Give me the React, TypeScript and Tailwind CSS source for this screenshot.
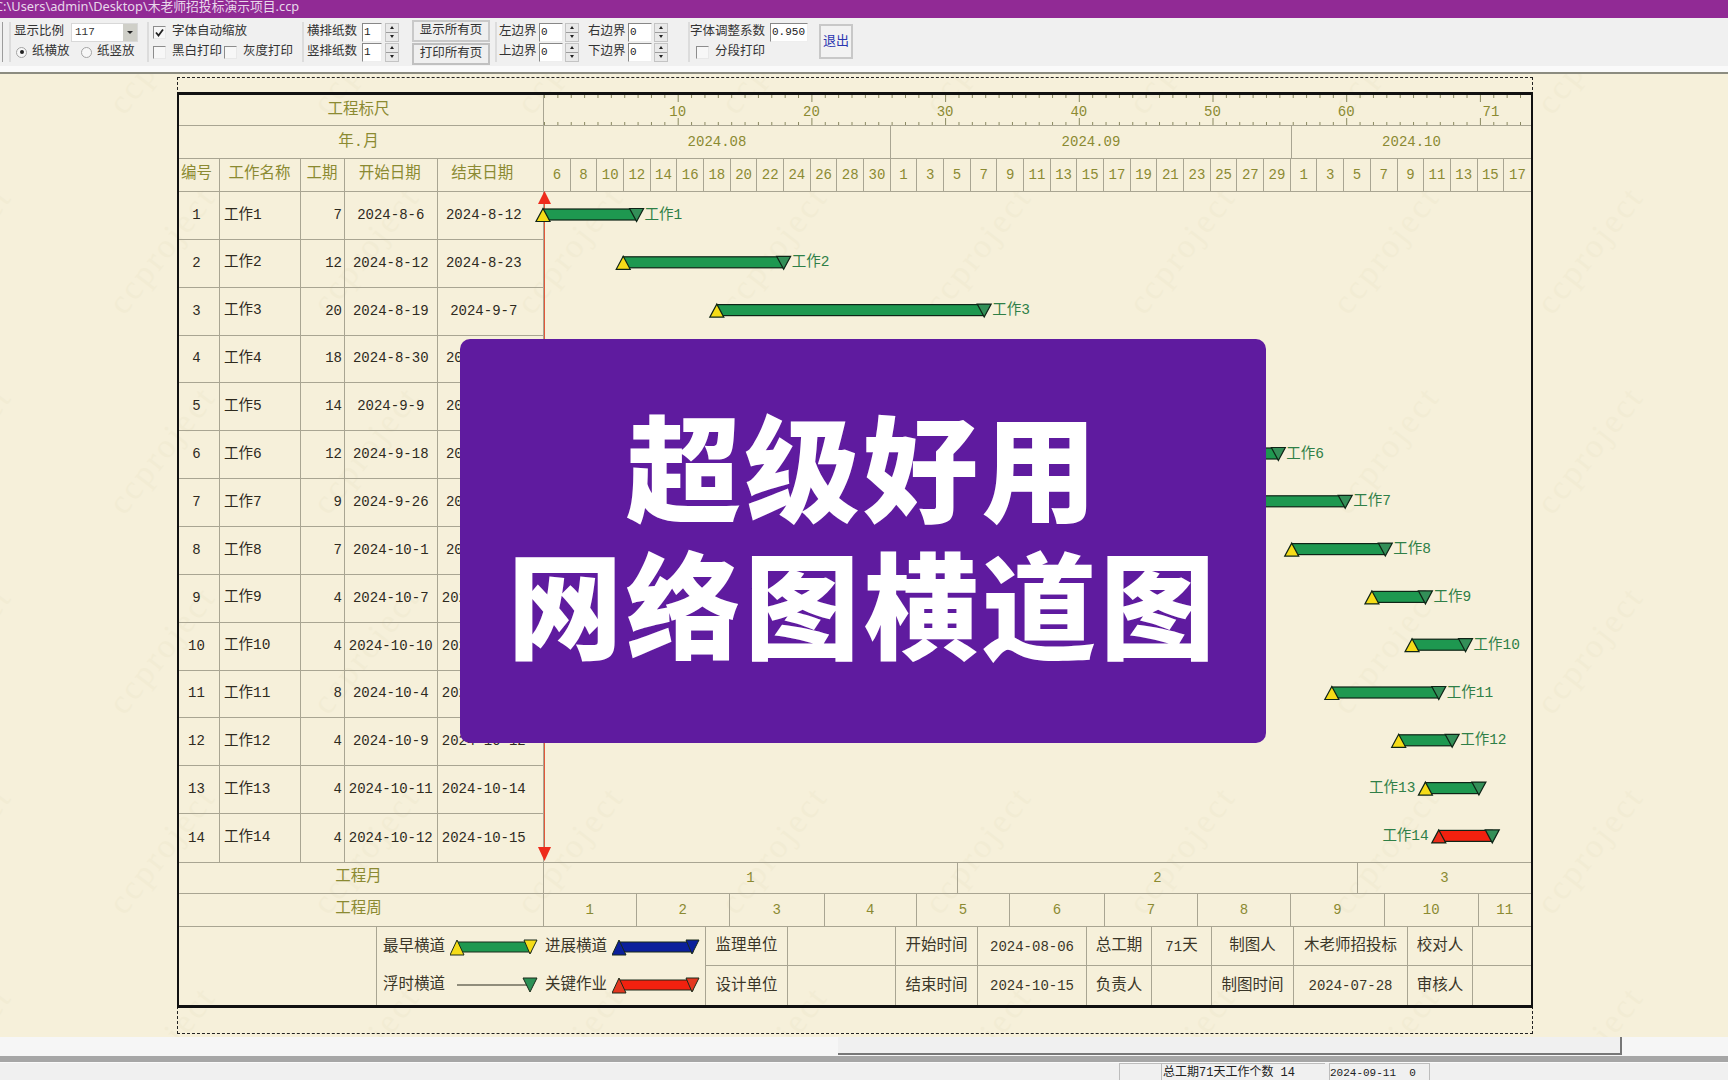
const GRID = 'border-[#a9a592]';
const OLIVE = 'text-[#8b8a32]';

type Job = { id: number; days: number; start: string; end: string; offset: number; critical?: boolean; labelLeft?: boolean };

const JOBS: Job[] = [
  { id: 1, days: 7, start: '2024-8-6', end: '2024-8-12', offset: 0 },
  { id: 2, days: 12, start: '2024-8-12', end: '2024-8-23', offset: 6 },
  { id: 3, days: 20, start: '2024-8-19', end: '2024-9-7', offset: 13 },
  { id: 4, days: 18, start: '2024-8-30', end: '2024-9-16', offset: 24 },
  { id: 5, days: 14, start: '2024-9-9', end: '2024-9-22', offset: 34 },
  { id: 6, days: 12, start: '2024-9-18', end: '2024-9-29', offset: 43 },
  { id: 7, days: 9, start: '2024-9-26', end: '2024-10-4', offset: 51 },
  { id: 8, days: 7, start: '2024-10-1', end: '2024-10-7', offset: 56 },
  { id: 9, days: 4, start: '2024-10-7', end: '2024-10-10', offset: 62 },
  { id: 10, days: 4, start: '2024-10-10', end: '2024-10-13', offset: 65 },
  { id: 11, days: 8, start: '2024-10-4', end: '2024-10-11', offset: 59 },
  { id: 12, days: 4, start: '2024-10-9', end: '2024-10-12', offset: 64 },
  { id: 13, days: 4, start: '2024-10-11', end: '2024-10-14', offset: 66, labelLeft: true },
  { id: 14, days: 4, start: '2024-10-12', end: '2024-10-15', offset: 67, critical: true, labelLeft: true },
];

const DAY_LABELS = [
  6, 8, 10, 12, 14, 16, 18, 20, 22, 24, 26, 28, 30,
  1, 3, 5, 7, 9, 11, 13, 15, 17, 19, 21, 23, 25, 27, 29,
  1, 3, 5, 7, 9, 11, 13, 15, 17,
];

const WEEK_WIDTHS = [92.5, 93.5, 94.5, 92.5, 93, 95, 93, 93, 94, 93.5, 52.5];
const DAY_PX = 13.37;

function Check({ on }: { on?: boolean }) {
  return (
    <span className="flex h-[13px] w-[13px] shrink-0 items-center justify-center border border-t-[#8c8c8c] border-l-[#8c8c8c] border-r-[#e8e8e8] border-b-[#e8e8e8] bg-[#f7f7f7]">
      {on && (
        <svg width="9" height="9" viewBox="0 0 9 9">
          <path d="M1 4.5 L3.5 7.5 L8 1.5" fill="none" stroke="#222" strokeWidth="1.8" />
        </svg>
      )}
    </span>
  );
}

function Radio({ on }: { on?: boolean }) {
  return (
    <span className="flex h-[11px] w-[11px] shrink-0 items-center justify-center rounded-full border border-[#a4a4a4] bg-[#f7f7f7]">
      {on && <span className="h-[4px] w-[4px] rounded-full bg-[#222]" />}
    </span>
  );
}

function Spin() {
  return (
    <span className="flex h-[19px] w-[14px] shrink-0 flex-col border border-[#c4c4c4] bg-[#e9e9e9] text-[#222]">
      <span className="flex flex-1 items-center justify-center border-b border-[#9c9c9c]">
        <span className="h-0 w-0 border-x-[2px] border-b-[3px] border-x-transparent border-b-[#222]" />
      </span>
      <span className="flex flex-1 items-center justify-center">
        <span className="h-0 w-0 border-x-[2px] border-t-[3px] border-x-transparent border-t-[#222]" />
      </span>
    </span>
  );
}

function NumInput({ value, width }: { value: string; width: string }) {
  return (
    <span className={`flex h-[19px] shrink-0 items-center border border-t-[#888] border-l-[#888] border-r-[#eee] border-b-[#eee] bg-white pl-[1px] text-[11px] text-[#222] ${width}`}>
      {value}
    </span>
  );
}

function Field({ label, value }: { label: string; value: string }) {
  return (
    <div className="flex items-center">
      <span className="w-[40px] whitespace-nowrap text-[12.5px]">{label}</span>
      <NumInput value={value} width="w-[24px]" />
      <span className="ml-[2px]">
        <Spin />
      </span>
    </div>
  );
}

function Toolbar() {
  return (
    <div className="flex h-[48px] items-start bg-[#f0f0f0] pt-[4px] text-[#333]">
      <div className="h-[40px] w-[3px] border-r border-[#9c9c9c]" />
      <div className="ml-[6px] grid h-[40px] w-[133px] grid-rows-2 border-l-2 border-[#dcdcdc] pl-[3px] text-[12.5px]">
        <div className="flex items-center">
          <span className="w-[57px] whitespace-nowrap">显示比例</span>
          <span className="flex h-[19px] w-[67px] items-center justify-between border border-[#d8d8d8] bg-white pl-[3px] text-[11px]">
            117
            <span className="flex h-full w-[14px] items-center justify-center bg-[#cfcfc8]">
              <span className="h-0 w-0 border-x-[3px] border-t-[3px] border-x-transparent border-t-[#222]" />
            </span>
          </span>
        </div>
        <div className="flex items-center pl-[2px]">
          <Radio on />
          <span className="ml-[5px] w-[49px] whitespace-nowrap">纸横放</span>
          <Radio />
          <span className="ml-[5px] whitespace-nowrap">纸竖放</span>
        </div>
      </div>
      <div className="ml-[5px] grid h-[40px] w-[149px] grid-rows-2 border-l-2 border-[#dcdcdc] pl-[4px] text-[12.5px]">
        <div className="flex items-center">
          <Check on />
          <span className="ml-[6px] whitespace-nowrap">字体自动缩放</span>
        </div>
        <div className="flex items-center">
          <Check />
          <span className="ml-[6px] w-[52px] whitespace-nowrap">黑白打印</span>
          <Check />
          <span className="ml-[6px] whitespace-nowrap">灰度打印</span>
        </div>
      </div>
      <div className="ml-[6px] grid h-[40px] w-[106px] grid-rows-2 border-l-2 border-[#dcdcdc] pl-[3px] text-[12.5px]">
        <div className="flex items-center">
          <span className="w-[55px] whitespace-nowrap">横排纸数</span>
          <NumInput value="1" width="w-[20px]" />
          <span className="ml-[3px]">
            <Spin />
          </span>
        </div>
        <div className="flex items-center">
          <span className="w-[55px] whitespace-nowrap">竖排纸数</span>
          <NumInput value="1" width="w-[20px]" />
          <span className="ml-[3px]">
            <Spin />
          </span>
        </div>
      </div>
      <div className="ml-[4px] -mt-[2px] flex w-[78px] flex-col gap-[1px] text-[12.5px]">
        <button className="h-[22px] border-2 border-[#c9c9c9] bg-[#efefef] text-[#333]">显示所有页</button>
        <button className="h-[22px] border-2 border-[#c0c0c0] bg-[#efefef] text-[#333]">打印所有页</button>
      </div>
      <div className="ml-[5px] grid h-[40px] w-[177px] grid-cols-[89px_1fr] grid-rows-2 border-l-2 border-[#dcdcdc] pl-[2px]">
        <Field label="左边界" value="0" />
        <Field label="右边界" value="0" />
        <Field label="上边界" value="0" />
        <Field label="下边界" value="0" />
      </div>
      <div className="ml-[16px] grid h-[40px] w-[124px] grid-rows-2 border-l-2 border-[#dcdcdc] text-[12.5px]">
        <div className="flex items-center">
          <span className="w-[80px] whitespace-nowrap">字体调整系数</span>
          <NumInput value="0.950" width="w-[38px]" />
        </div>
        <div className="flex items-center pl-[6px]">
          <Check />
          <span className="ml-[6px] whitespace-nowrap">分段打印</span>
        </div>
      </div>
      <button className="ml-[7px] mt-[2px] h-[35px] w-[34px] border-2 border-[#c8c8c8] bg-[#f2f2f2] text-[13px] text-[#2a35b0]">退出</button>
    </div>
  );
}

function Watermarks() {
  const marks = [];
  for (let row = 0; row < 6; row++) {
    for (let col = 0; col < 9; col++) {
      marks.push({ key: `${row}-${col}`, left: col * 204 - 118, top: row * 200 - 50 });
    }
  }
  return (
    <div className="pointer-events-none absolute inset-0 overflow-hidden">
      {marks.map((m) => (
        <span
          key={m.key}
          className="absolute -rotate-[52deg] whitespace-nowrap text-[34px] tracking-[3px] text-[#f2ecd4] font-['Liberation_Serif',serif]"
          style={{ left: m.left, top: m.top }}
        >
          ccproject
        </span>
      ))}
    </div>
  );
}

function Ruler() {
  const ticks = Array.from({ length: 74 }, (_, i) => i);
  return (
    <svg width="987" height="31" className="block">
      {ticks.map((d) => {
        const x = d * DAY_PX + 0.5;
        const major = d % 10 === 0 && d > 0 && d <= 70;
        return (
          <g key={d} stroke="#8b8a62">
            <line x1={x} y1="0" x2={x} y2={major ? 7 : 3} />
            <line x1={x} y1="30" x2={x} y2={major ? 23 : 27} />
          </g>
        );
      })}
      {[10, 20, 30, 40, 50, 60].map((d) => (
        <text key={d} x={d * DAY_PX} y="21" textAnchor="middle" fontSize="14" fill="#8b8a32">
          {d}
        </text>
      ))}
      <text x="947" y="21" textAnchor="middle" fontSize="14" fill="#8b8a32">
        71
      </text>
    </svg>
  );
}

function Bars() {
  return (
    <svg width="987" height="670" className="block overflow-visible">
      <line x1="0.5" y1="8" x2="0.5" y2="660" stroke="#e2583a" />
      <polygon points="0.5,-1 -6,12 7,12" fill="#ee2b1c" />
      <polygon points="0.5,669 -6,655 7,655" fill="#ee2b1c" />
      {JOBS.map((job, i) => {
        const x1 = job.offset * DAY_PX - 1;
        const x2 = (job.offset + job.days) * DAY_PX - 1;
        const cy = 22.5 + i * 47.8;
        const label = `工作${job.id}`;
        return (
          <g key={job.id} stroke="#0e2416" strokeWidth="1.2">
            <rect x={x1} y={cy - 5.5} width={x2 - x1} height="11" fill={job.critical ? '#f2210f' : '#1e9850'} />
            <polygon
              points={`${x1},${cy - 6} ${x1 - 7},${cy + 7} ${x1 + 7},${cy + 7}`}
              fill={job.critical ? '#ec2c1a' : '#f5dc18'}
            />
            <polygon
              points={`${x2 - 7},${cy - 6} ${x2 + 7},${cy - 6} ${x2},${cy + 7}`}
              fill="#338f58"
            />
            <text
              x={job.labelLeft ? x1 - 10 : x2 + 8}
              y={cy + 4}
              textAnchor={job.labelLeft ? 'end' : 'start'}
              fontSize="14.5"
              fill="#2f7f47"
              stroke="none"
            >
              {label}
            </text>
          </g>
        );
      })}
    </svg>
  );
}

function LegendBar({ kind }: { kind: 'early' | 'progress' | 'float' | 'critical' }) {
  if (kind === 'float') {
    return (
      <svg width="88" height="22" className="shrink-0">
        <line x1="7" y1="10" x2="78" y2="10" stroke="#2b2b1c" />
        <polygon points="73,3 87,3 80,17" fill="#2c9156" stroke="#1a2a1a" />
      </svg>
    );
  }
  const body = kind === 'early' ? '#1e9850' : kind === 'progress' ? '#0b1f9b' : '#f2210f';
  const head = kind === 'early' ? '#f5dc18' : kind === 'critical' ? '#e3371f' : body;
  const tail = kind === 'early' ? '#f5dc18' : kind === 'critical' ? '#e3371f' : body;
  return (
    <svg width="88" height="22" className="shrink-0">
      <rect x="7" y="5" width="74" height="10" fill={body} stroke="#1a2a1a" />
      <polygon points="7,3 0,18 14,18" fill={head} stroke="#1a2a1a" />
      <polygon points="74,3 87,3 80,17" fill={tail} stroke="#1a2a1a" />
    </svg>
  );
}

function LegendCell({ label, kind }: { label: string; kind: 'early' | 'progress' | 'float' | 'critical' }) {
  return (
    <div className="flex items-center">
      <span className="w-[67px] whitespace-nowrap text-[15.5px]">{label}</span>
      <LegendBar kind={kind} />
    </div>
  );
}

function InfoCell({ children, bottom }: { children?: React.ReactNode; bottom?: boolean }) {
  return (
    <div className={`flex items-center justify-center whitespace-nowrap border-r pt-[2px] ${GRID} ${bottom ? '' : `border-b ${GRID}`}`}>
      {children}
    </div>
  );
}

function GanttTable() {
  const rowLabel = `flex w-[365px] shrink-0 items-center justify-center border-r pr-[5px] ${GRID} text-[15.5px] ${OLIVE}`;
  return (
    <div className="-mx-px border-x-2 border-y-[3px] border-[#111] text-[14px] text-[#2e2a1e]">
      {/* ruler */}
      <div className={`flex h-[31px] border-b ${GRID}`}>
        <div className={`${rowLabel} pt-[2px]`}>工程标尺</div>
        <Ruler />
      </div>
      {/* months */}
      <div className={`flex h-[33px] border-b ${GRID}`}>
        <div className={`${rowLabel} pt-[2px]`}>年.月</div>
        <div className={`flex w-[347px] items-center justify-center border-r pt-[1px] ${GRID} ${OLIVE}`}>2024.08</div>
        <div className={`flex w-[401px] items-center justify-center border-r pt-[1px] ${GRID} ${OLIVE}`}>2024.09</div>
        <div className={`flex flex-1 items-center justify-center pt-[1px] ${OLIVE}`}>2024.10</div>
      </div>
      {/* header */}
      <div className={`flex h-[33px] border-b ${GRID} ${OLIVE}`}>
        <div className="grid w-[365px] shrink-0 grid-cols-[41px_81px_44px_92.5px_106.5px] text-[15.5px]">
          <div className={`flex items-center justify-center whitespace-nowrap border-r pr-[5px] ${GRID}`}>编号</div>
          <div className={`flex items-center justify-center whitespace-nowrap border-r pr-[1px] ${GRID}`}>工作名称</div>
          <div className={`flex items-center justify-center whitespace-nowrap border-r pr-[1px] ${GRID}`}>工期</div>
          <div className={`flex items-center justify-center whitespace-nowrap border-r pr-[2px] ${GRID}`}>开始日期</div>
          <div className={`flex items-center justify-center whitespace-nowrap border-r pr-[16px] ${GRID}`}>结束日期</div>
        </div>
        <div className="grid flex-1 grid-cols-[repeat(37,26.68px)]">
          {DAY_LABELS.map((d, i) => (
            <div key={i} className={`flex items-center justify-center border-r ${GRID} last:border-r-0`}>
              {d}
            </div>
          ))}
        </div>
      </div>
      {/* jobs */}
      <div className="flex h-[670px]">
        <div className="grid w-[365px] shrink-0 grid-rows-14">
          {JOBS.map((job) => (
            <div key={job.id} className={`grid grid-cols-[41px_81px_44px_92.5px_106.5px] border-b ${GRID} last:border-b-0`}>
              <div className={`flex items-center justify-center border-r pr-[5px] ${GRID}`}>{job.id}</div>
              <div className={`flex items-center border-r ${GRID} pl-[4px] text-[14.5px]`}>工作{job.id}</div>
              <div className={`flex items-center justify-end border-r ${GRID} pr-[2px]`}>{job.days}</div>
              <div className={`flex items-center justify-center border-r ${GRID}`}>{job.start}</div>
              <div className={`flex items-center justify-center border-r pr-[13px] ${GRID}`}>{job.end}</div>
            </div>
          ))}
        </div>
        <Bars />
      </div>
      {/* project month */}
      <div className={`flex h-[32px] border-y ${GRID}`}>
        <div className={rowLabel}>工程月</div>
        <div className={`flex w-[414px] items-center justify-center border-r ${GRID} ${OLIVE}`}>1</div>
        <div className={`flex w-[400px] items-center justify-center border-r ${GRID} ${OLIVE}`}>2</div>
        <div className={`flex flex-1 items-center justify-center ${OLIVE}`}>3</div>
      </div>
      {/* project week */}
      <div className={`flex h-[33px] border-b ${GRID}`}>
        <div className={rowLabel}>工程周</div>
        {WEEK_WIDTHS.map((w, i) => (
          <div
            key={i}
            className={`flex items-center justify-center border-r ${GRID} last:border-r-0 ${OLIVE}`}
            style={{ width: w }}
          >
            {i + 1}
          </div>
        ))}
      </div>
      {/* legend and sign-off */}
      <div className="grid h-[78px] grid-cols-[198px_329px_82px_108px_82px_109px_65px_60px_82px_114px_65px_58px] grid-rows-2 text-[15.5px] text-[#3a3628]">
        <div className={`row-span-2 border-r ${GRID}`} />
        <div className={`row-span-2 grid grid-cols-[162px_1fr] grid-rows-2 items-center border-r pl-[6px] pt-[2px] ${GRID}`}>
          <LegendCell label="最早横道" kind="early" />
          <LegendCell label="进展横道" kind="progress" />
          <LegendCell label="浮时横道" kind="float" />
          <LegendCell label="关键作业" kind="critical" />
        </div>
        <InfoCell>监理单位</InfoCell>
        <InfoCell />
        <InfoCell>开始时间</InfoCell>
        <InfoCell>
          <span className="text-[14px]">2024-08-06</span>
        </InfoCell>
        <InfoCell>总工期</InfoCell>
        <InfoCell>
          <span className="text-[14px]">71</span>天
        </InfoCell>
        <InfoCell>制图人</InfoCell>
        <InfoCell>木老师招投标</InfoCell>
        <InfoCell>校对人</InfoCell>
        <div className={`border-b ${GRID}`} />
        <InfoCell bottom>设计单位</InfoCell>
        <InfoCell bottom />
        <InfoCell bottom>结束时间</InfoCell>
        <InfoCell bottom>
          <span className="text-[14px]">2024-10-15</span>
        </InfoCell>
        <InfoCell bottom>负责人</InfoCell>
        <InfoCell bottom />
        <InfoCell bottom>制图时间</InfoCell>
        <InfoCell bottom>
          <span className="text-[14px]">2024-07-28</span>
        </InfoCell>
        <InfoCell bottom>审核人</InfoCell>
        <div />
      </div>
    </div>
  );
}

export default function App() {
  return (
    <div className="relative flex h-[1080px] w-[1728px] flex-col overflow-hidden bg-[#f0f0f0] font-['Liberation_Mono','Noto_Sans_CJK_SC',monospace]">
      {/* title bar */}
      <div className="h-[18px] overflow-hidden whitespace-nowrap bg-[#912a95] text-[12.8px] leading-[13px] text-[#e8d8ea] font-['Noto_Sans','Noto_Sans_CJK_SC',sans-serif]">
        <span className="-ml-[5px] inline-block">C:\Users\admin\Desktop\木老师招投标演示项目.ccp</span>
      </div>
      <Toolbar />
      <div className="h-[6px] bg-[#fafafa]" />
      <div className="h-[2px] bg-[#8c8c80]" />

      {/* paper */}
      <div className="relative h-[963px] bg-[#f6f0da] pt-[3px]">
        <Watermarks />
        <div className="relative ml-[177px] h-[957px] w-[1356px] border border-dashed border-[#222] pt-[14px]">
          <GanttTable />
        </div>
      </div>

      {/* scroll bar */}
      <div className="flex h-[19px] bg-[#f6f6f6]">
        <div className="ml-[838px] h-[18px] w-[784px] border-r-2 border-b-2 border-[#777] bg-[#f0f0f0]" />
      </div>
      <div className="h-[6px] bg-[#a6a6a6]" />
      <div className="h-[1px] bg-[#fafafa]" />

      {/* status bar */}
      <div className="flex h-[17px] overflow-hidden bg-[#f0f0f0] pl-[1119px] text-[#222]">
        <div className="w-[42px] border-t border-l border-[#bdbdbd]" />
        <div className="w-[164px] whitespace-nowrap border-t border-l border-[#bdbdbd] pl-[1px] text-[12px]">总工期71天工作个数 14</div>
        <div className="ml-[4px] w-[101px] whitespace-pre border-t border-l border-r border-[#bdbdbd] pt-[1px] text-[11px]">2024-09-11  0</div>
      </div>

      {/* promo card */}
      <div className="absolute left-[460px] top-[339px] flex h-[404px] w-[806px] flex-col items-center justify-center rounded-[10px] bg-[#5f1b9f] pb-[18px] text-[115px] font-black leading-[137px] tracking-[3.5px] text-white font-['Noto_Sans_CJK_SC',sans-serif]">
        <div>超级好用</div>
        <div>网络图横道图</div>
      </div>
    </div>
  );
}
